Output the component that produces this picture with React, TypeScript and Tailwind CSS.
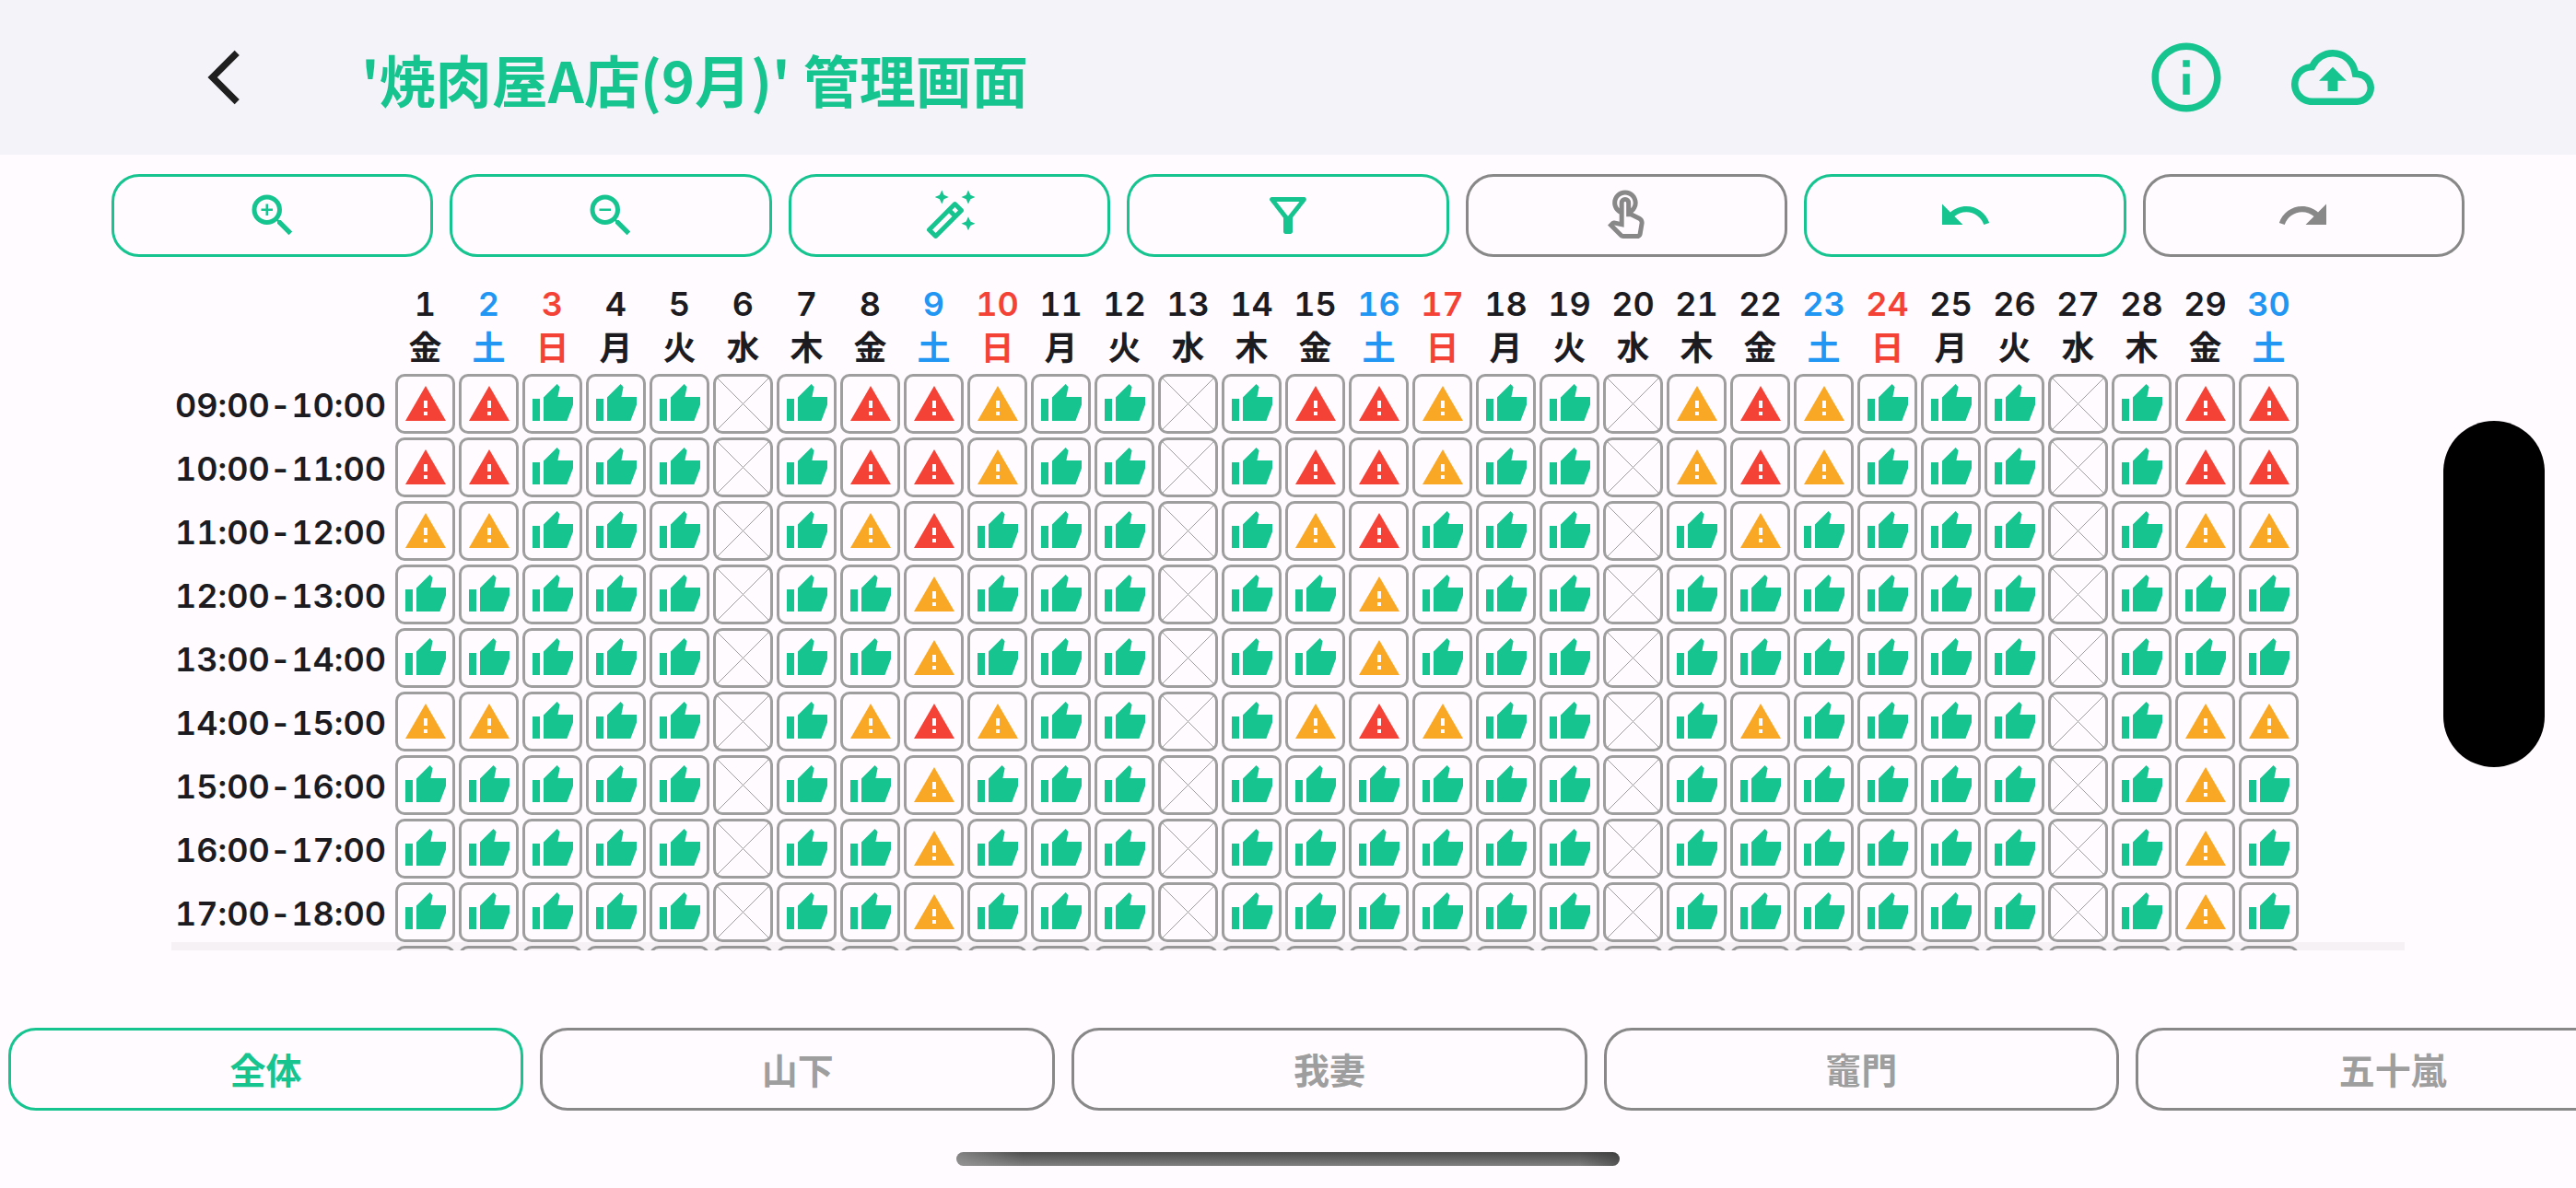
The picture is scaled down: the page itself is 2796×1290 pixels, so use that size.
import type { ReactNode } from "react";
import {
  MdArrowBackIosNew,
  MdInfoOutline,
  MdOutlineAutoFixHigh,
  MdOutlineBackup,
  MdOutlineFilterAlt,
  MdOutlineTouchApp,
  MdRedo,
  MdUndo,
  MdWarning,
  MdZoomIn,
  MdZoomOut,
} from "react-icons/md";

const WEEKDAYS = ["金", "土", "日", "月", "火", "水", "木"];
const DAYS = Array.from({ length: 30 }, (_, i) => ({
  date: i + 1,
  weekday: WEEKDAYS[i % 7],
}));

// R: shortage, Y: caution, G: good, X: closed
const ROWS: { time: string; cells: string }[] = [
  { time: "09:00-10:00", cells: "RRGGGXGRRYGGXGRRYGGXYRYGGGXGRR" },
  { time: "10:00-11:00", cells: "RRGGGXGRRYGGXGRRYGGXYRYGGGXGRR" },
  { time: "11:00-12:00", cells: "YYGGGXGYRGGGXGYRGGGXGYGGGGXGYY" },
  { time: "12:00-13:00", cells: "GGGGGXGGYGGGXGGYGGGXGGGGGGXGGG" },
  { time: "13:00-14:00", cells: "GGGGGXGGYGGGXGGYGGGXGGGGGGXGGG" },
  { time: "14:00-15:00", cells: "YYGGGXGYRYGGXGYRYGGXGYGGGGXGYY" },
  { time: "15:00-16:00", cells: "GGGGGXGGYGGGXGGGGGGXGGGGGGXGYG" },
  { time: "16:00-17:00", cells: "GGGGGXGGYGGGXGGGGGGXGGGGGGXGYG" },
  { time: "17:00-18:00", cells: "GGGGGXGGYGGGXGGGGGGXGGGGGGXGYG" },
  { time: "", cells: "GGGGGXGGYGGGXGGGGGGXGGGGGGXGYG" },
];

const STAFF = ["全体", "山下", "我妻", "竈門", "五十嵐"];

const STATUS_LABEL: Record<string, string> = {
  R: "不足",
  Y: "注意",
  G: "良好",
  X: "休業",
};

function ThumbUp() {
  return (
    <svg viewBox="0 0 24 24" className="size-12 fill-[#16c490]" aria-hidden="true">
      <path d="M1 21h4V9H1zM7 21h12.7L23 12.2V8h-8.3l1.1-5.4L14.3 1 7 8.2z" />
    </svg>
  );
}

function Closed() {
  return (
    <svg viewBox="0 0 59 59" className="size-full stroke-[#9e9e9e]" aria-hidden="true">
      <path d="M0 0 59 59M59 0 0 59" fill="none" strokeWidth="1" />
    </svg>
  );
}

function Status({ kind }: { kind: string }) {
  if (kind === "G") return <ThumbUp />;
  if (kind === "X") return <Closed />;
  return (
    <MdWarning
      aria-hidden="true"
      className={kind === "R" ? "size-12 text-[#f44336]" : "size-12 text-[#f9a825]"}
    />
  );
}

function ToolButton({
  label,
  muted,
  children,
}: {
  label: string;
  muted?: boolean;
  children: ReactNode;
}) {
  return (
    <button
      type="button"
      aria-label={label}
      className={`flex h-[90px] flex-1 items-center justify-center rounded-[30px] border-3 text-[60px] ${
        muted ? "border-[#888888] text-[#888888]" : "border-[#16c490] text-[#16c490]"
      }`}
    >
      {children}
    </button>
  );
}

function dayColor(weekday: string) {
  if (weekday === "土") return "text-[#2196f3]";
  if (weekday === "日") return "text-[#f44336]";
  return "text-[#1c1b1f]";
}

export default function App() {
  return (
    <div className="relative flex h-screen flex-col overflow-hidden bg-[#fffbff] font-['Inter','Noto_Sans_CJK_JP',sans-serif] text-[#1c1b1f]">
      <header className="flex h-[168px] shrink-0 items-center bg-[#f4f3f9] pr-[219px] pl-[208px] text-[#16c490]">
        <button type="button" aria-label="戻る" className="text-[70px] text-[#1f1f1f]">
          <MdArrowBackIosNew />
        </button>
        <h1 className="ml-[114px] flex-1 pt-1 font-['Noto_Sans_CJK_JP',sans-serif] text-[61px] leading-[80px] font-bold">
          '焼肉屋A店(9月)' 管理画面
        </h1>
        <div className="flex gap-[69px] text-[90px]">
          <button type="button" aria-label="情報">
            <MdInfoOutline />
          </button>
          <button type="button" aria-label="アップロード">
            <MdOutlineBackup />
          </button>
        </div>
      </header>

      <div role="toolbar" aria-label="操作" className="mt-[21px] flex shrink-0 gap-[18px] px-[121px]">
        <ToolButton label="拡大"><MdZoomIn /></ToolButton>
        <ToolButton label="縮小"><MdZoomOut /></ToolButton>
        <ToolButton label="自動入力"><MdOutlineAutoFixHigh /></ToolButton>
        <ToolButton label="絞り込み"><MdOutlineFilterAlt /></ToolButton>
        <ToolButton label="タッチ入力" muted><MdOutlineTouchApp /></ToolButton>
        <ToolButton label="元に戻す"><MdUndo /></ToolButton>
        <ToolButton label="やり直す" muted><MdRedo /></ToolButton>
      </div>

      <main className="relative mx-[186px] mt-[27px] min-h-0 flex-1 overflow-hidden">
        <table className="w-[2311px] table-fixed border-collapse text-[36px] font-semibold [font-feature-settings:'calt'_0,'tnum'_1]">
          <colgroup>
            <col className="w-[241px]" />
            <col span={30} />
          </colgroup>
          <thead>
            <tr className="h-[98px]">
              <td />
              {DAYS.map((d) => (
                <th
                  key={d.date}
                  scope="col"
                  className={`p-0 pb-[2px] text-center leading-[48px] font-semibold ${dayColor(d.weekday)}`}
                >
                  <div>{d.date}</div>
                  <div>{d.weekday}</div>
                </th>
              ))}
            </tr>
          </thead>
          <tbody>
            {ROWS.map((row, r) => (
              <tr key={r} className="h-[69px]">
                <th scope="row" className="p-0 pt-[2px] pr-2 text-right leading-[48px] font-semibold whitespace-nowrap">
                  {row.time}
                </th>
                {row.cells.split("").map((kind, c) => (
                  <td key={c} className="p-[2px]">
                    <button
                      type="button"
                      aria-label={`${c + 1}日 ${row.time} ${STATUS_LABEL[kind]}`}
                      className="flex size-[65px] items-center justify-center rounded-[10px] border-3 border-[#9e9e9e]"
                    >
                      <Status kind={kind} />
                    </button>
                  </td>
                ))}
              </tr>
            ))}
          </tbody>
        </table>
        <div className="absolute inset-x-0 bottom-0 h-[9px] bg-black/4" />
      </main>

      <nav aria-label="スタッフ" className="mt-[84px] flex shrink-0 gap-[18px] overflow-hidden pl-[9px]">
        {STAFF.map((name, i) => (
          <button
            key={name}
            type="button"
            aria-pressed={i === 0}
            className={`flex h-[90px] w-[20vw] shrink-0 items-center justify-center rounded-[30px] border-3 pt-1 text-[39px] font-bold ${
              i === 0 ? "border-[#16c490] text-[#16c490]" : "border-[#888888] text-[#9e9e9e]"
            }`}
          >
            {name}
          </button>
        ))}
      </nav>

      <div className="mx-auto mt-[45px] mb-6 h-[15px] w-[720px] shrink-0 rounded-full bg-[linear-gradient(to_right,#a0a0a0a0,transparent_10%,transparent_94%,#30303080),linear-gradient(to_bottom,#4d4d4d,#808080)]" />

      <div className="absolute top-[457px] right-[34px] h-[376px] w-[110px] rounded-full bg-black" />
    </div>
  );
}
